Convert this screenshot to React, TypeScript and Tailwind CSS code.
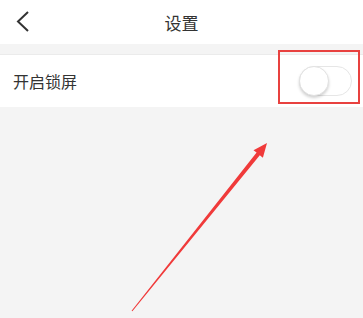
import React from 'react';

export default function App() {
  return (
    <div
      className="relative w-[363px] h-[318px] overflow-hidden bg-[#f4f4f4] text-[#333]"
      style={{ fontFamily: '"Noto Sans CJK SC", "Noto Sans", sans-serif' }}
    >
      {/* Header */}
      <div className="relative h-[44px] bg-white flex items-center justify-center">
        <svg className="absolute left-[14px] top-[10px]" width="20" height="24" viewBox="0 0 20 24">
          <path d="M14 2 L4 11.5 L14 21" fill="none" stroke="#333" strokeWidth="2" />
        </svg>
        <span className="text-[17px] leading-none">设置</span>
      </div>

      <div className="h-[10px]" />

      {/* Lock row */}
      <div className="h-[53px] bg-white border-t border-[#ebebeb] flex items-center justify-between pl-[13px] pr-[11px]">
        <span className="text-[16px] leading-none">开启锁屏</span>
        <div className="relative w-[53px] h-[30px] rounded-full border border-[#e6e6e6] bg-white">
          <div className="absolute -left-px -top-px w-[30px] h-[30px] rounded-full bg-white border border-[#e2e2e2] shadow-[0_2px_3px_rgba(0,0,0,0.18)]" />
        </div>
      </div>

      {/* Annotation box */}
      <div className="absolute left-[278px] top-[50px] w-[82px] h-[54px] border-2 border-[#e8413f]" />

      {/* Annotation arrow */}
      <svg className="absolute left-0 top-0" width="363" height="318" viewBox="0 0 363 318">
        <polygon
          points="131.6,310.7 256.6,152.6 253.5,150.2 267,143 262.9,157.7 259.8,155.2 132.4,311.3"
          fill="#f03a3a"
        />
      </svg>
    </div>
  );
}
